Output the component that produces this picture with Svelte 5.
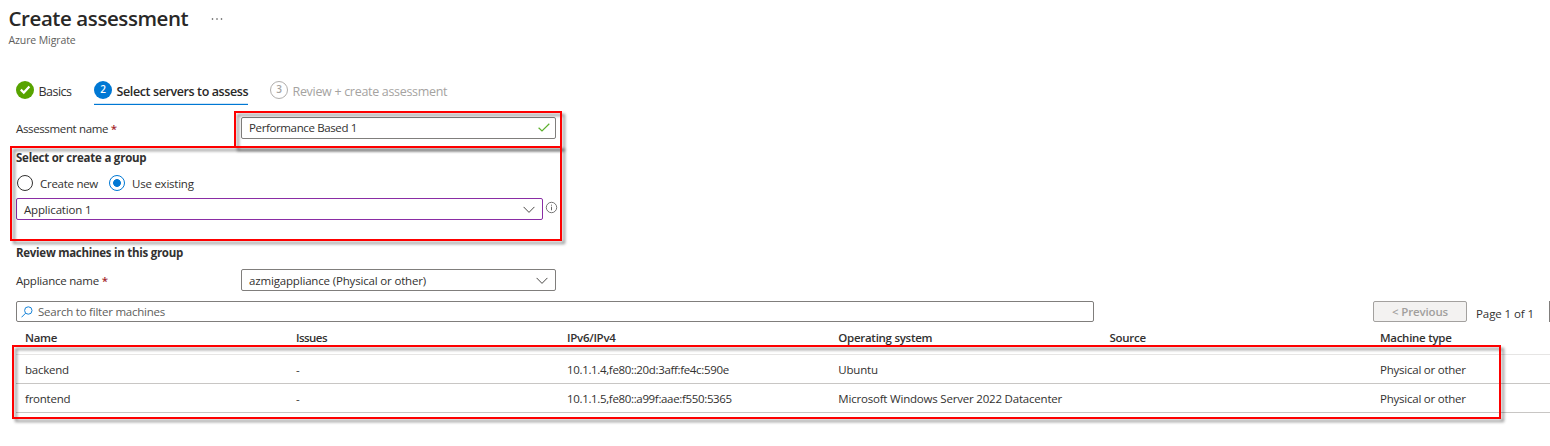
<script>
  const columns = ['Name', 'Issues', 'IPv6/IPv4', 'Operating system', 'Source', 'Machine type'];
  const machines = [
    { name: 'backend', ip: '10.1.1.4,fe80::20d:3aff:fe4c:590e', os: 'Ubuntu', type: 'Physical or other' },
    { name: 'frontend', ip: '10.1.1.5,fe80::a99f:aae:f550:5365', os: 'Microsoft Windows Server 2022 Datacenter', type: 'Physical or other' }
  ];
</script>

{#snippet chevron()}
  <svg class="chevron" width="12" height="8" viewBox="0 0 12 8"><path d="M.6 .9 6 6.4 11.4 .9" fill="none" stroke="#4a4846" stroke-width="1" /></svg>
{/snippet}

<main>
  <header>
    <div class="heading"><h1>Create assessment</h1>
      <svg width="12" height="4" viewBox="0 0 12 4" fill="#444"><circle cx="1.5" cy="2" r=".8" /><circle cx="6" cy="2" r=".8" /><circle cx="10.5" cy="2" r=".8" /></svg>
    </div>
    <p class="subtitle">Azure Migrate</p>
  </header>

  <nav>
    <div class="step basics">
      <svg width="18" height="18" viewBox="0 0 18 18"><circle cx="9" cy="9" r="9" fill="#57a300" /><path d="M4.8 8.6 7.8 11.6 13.4 5.6" fill="none" stroke="#fff" stroke-width="2.2" /></svg>
      <span>Basics</span>
    </div>
    <div class="step active"><i>2</i><span>Select servers to assess</span></div>
    <div class="step pending"><i>3</i><span>Review + create assessment</span></div>
  </nav>

  <section class="assessment row">
    <label for="assessment" class="tight">Assessment name <b>*</b></label>
    <div class="field" id="assessment"><span class="tighter">Performance Based 1</span>
      <svg width="12" height="9" viewBox="0 0 12 9"><path d="M.6 4.8 4 8 11.3 .8" fill="none" stroke="#5db02e" stroke-width="1.2" /></svg>
    </div>
    <div class="mark mark-name"></div>
  </section>

  <section class="group">
    <h2>Select or create a group</h2>
    <div class="radios">
      <span class="radio"></span><span class="new">Create new</span>
      <span class="radio on"></span><span class="existing">Use existing</span>
    </div>
    <div class="picker">
      <div class="field purple"><span class="loose">Application 1</span>{@render chevron()}</div>
      <svg width="12" height="12" viewBox="0 0 12 12" fill="none" stroke="#666"><circle cx="6.5" cy="5.5" r="5.2" stroke-width=".9" /><path d="M6.5 4.7V8.3M6.5 2.7V3.7" stroke-width="1" /></svg>
    </div>
    <div class="mark mark-group"></div>
  </section>

  <h2 class="review">Review machines in this group</h2>
  <section class="row appliance">
    <label for="appliance">Appliance name <b>*</b></label>
    <div class="field" id="appliance"><span class="loose">azmigappliance (Physical or other)</span>{@render chevron()}</div>
  </section>

  <div class="toolbar">
    <div class="search">
      <svg width="12" height="12" viewBox="0 0 12 12" fill="none" stroke="#1683d8" stroke-width="1"><circle cx="7.3" cy="4.5" r="3.7" /><path d="M4.6 7.2.5 11.3" /></svg>
      <span>Search to filter machines</span>
    </div>
    <div class="previous">&lt; Previous</div>
    <span class="page">Page 1 of 1</span>
    <div class="next"></div>
  </div>

  <div class="table">
    <div class="line head">{#each columns as column}<span class:issues={column === 'Issues'}>{column}</span>{/each}</div>
    {#each machines as machine}
      <div class="line"><span>{machine.name}</span><span>-</span><span class="ip">{machine.ip}</span><span class="os">{machine.os}</span><span></span><span>{machine.type}</span></div>
    {/each}
    <div class="mark mark-table"></div>
  </div>
</main>

<style>
  :global(body) { background: #fff; overflow: hidden; }
  main { width: 1550px; height: 446px; overflow: hidden; font: 11.5px/16px "Open Sans", "Noto Sans", sans-serif; letter-spacing: -.23px; color: #323130; white-space: nowrap; }
  h1, h2, p { margin: 0; }
  span { display: block; }
  header { height: 80px; padding: 4px 0 0 8.5px; box-sizing: border-box; }
  .heading { display: flex; align-items: center; gap: 23px; height: 28px; }
  .heading svg { margin-top: 2px; }
  h1 { font-size: 20.5px; line-height: 28px; font-weight: 600; letter-spacing: -.42px; color: #292827; }
  .subtitle { font-size: 10.5px; line-height: 16px; letter-spacing: -.11px; color: #605e5c; }
  nav { display: flex; align-items: flex-start; height: 37px; padding-left: 16px; font-size: 12.5px; }
  .step { display: flex; align-items: center; height: 24px; padding-bottom: 1px; box-sizing: border-box; }
  .step > svg, .step i { margin-top: -3px; }
  .step i { flex: none; width: 18px; height: 18px; border-radius: 50%; box-sizing: border-box; font: 600 10px/17px "Open Sans", sans-serif; text-align: center; letter-spacing: 0; }
  .basics { gap: 4.5px; width: 78px; letter-spacing: -.53px; }
  .active { gap: 4.5px; width: 154px; height: 25px; padding-bottom: 1px; border-bottom: 1px solid #0078d4; box-shadow: inset 0 -1px #cfe5f6; font-weight: 600; letter-spacing: -.39px; color: #292827; }
  .active i { background: #0078d4; color: #fff; }
  .pending { gap: 4.5px; margin-left: 22px; color: #a5a3a1; letter-spacing: -.31px; }
  .pending i { border: 1px solid #b0aeac; line-height: 15px; }
  .row { display: flex; align-items: center; height: 22px; padding-left: 16px; position: relative; }
  label { width: 225px; padding-top: 2px; box-sizing: border-box; }
  label b { color: #a4262c; font-weight: 600; }
  .tight { letter-spacing: -.36px; }
  .tighter { letter-spacing: -.37px; }
  .loose { letter-spacing: -.17px; padding-top: 2px; }
  .field { width: 315px; height: 22px; box-sizing: border-box; border: 1px solid #807e7c; border-radius: 2px; display: flex; align-items: center; justify-content: space-between; padding: 0 5px 0 7px; background: #fff; }
  .field > svg { margin-top: -1px; }
  .field > .chevron { margin-top: 2px; margin-right: 2px; }
  .group { position: relative; padding-left: 16px; height: 106px; box-sizing: border-box; padding-top: 11px; }
  h2 { font-size: 11.5px; line-height: 16px; font-weight: 700; letter-spacing: -.23px; }
  .radios { display: flex; align-items: center; margin-top: 9px; height: 16px; padding-left: 1px; }
  .radio { width: 16px; height: 16px; border-radius: 50%; border: 1px solid #323130; box-sizing: border-box; margin-right: 7px; }
  .radio.on { border-color: #0078d4; background: radial-gradient(circle, #0078d4 3.5px, transparent 4.3px); }
  .new { width: 69px; letter-spacing: -.28px; }
  .new, .existing { padding-top: 2px; }
  .picker { display: flex; align-items: flex-start; margin-top: 7px; gap: 2px; }
  .picker > svg { margin-top: 4px; overflow: visible; }
  .purple { width: 527px; border-color: #8a2da5; }
  .review { padding-left: 16px; letter-spacing: -.27px; }
  .appliance { margin-top: 8px; }
  .toolbar { display: flex; height: 21px; margin-top: 10px; padding-left: 16px; }
  .toolbar > * { flex-shrink: 0; }
  .search { width: 1078px; box-sizing: border-box; border: 1px solid #807e7c; border-radius: 2px; display: flex; align-items: center; gap: 5px; padding-left: 4px; color: #605e5c; }
  .previous { width: 94px; margin-left: 279px; box-sizing: border-box; border: 1px solid #a3a19f; border-radius: 2px; background: #f3f2f1; color: #a19f9d; text-align: center; line-height: 19px; font-weight: 600; letter-spacing: -.15px; }
  .page { margin: 5px 0 0 9px; width: 73px; letter-spacing: -.08px; }
  .next { width: 94px; box-sizing: border-box; border: 1px solid #807e7c; }
  .table { position: relative; margin-left: 16px; }
  .line { display: grid; grid-template-columns: 271px 271px 271.3px 271.2px 270.5px 1fr; height: 29px; box-sizing: border-box; padding-left: 9px; line-height: 30px; border-bottom: 1px solid #c8c6c4; }
  .head { height: 33px; line-height: 32px; font-weight: 600; letter-spacing: -.28px; border-color: #e6e5e4; }
  .issues { letter-spacing: -.55px; }
  .ip { letter-spacing: -.34px; }
  .os { letter-spacing: -.2px; }
  .mark { position: absolute; box-sizing: border-box; border: 2px solid #fe0000; filter: drop-shadow(3px 3px 1.5px rgba(0, 0, 0, .45)); pointer-events: none; }
  .mark-name { left: 234px; top: -6px; width: 328px; height: 37px; }
  .mark-group { left: 10px; top: 7px; width: 552px; height: 95px; }
  .mark-table { left: -4px; top: 23px; width: 1489px; height: 74px; }
</style>
